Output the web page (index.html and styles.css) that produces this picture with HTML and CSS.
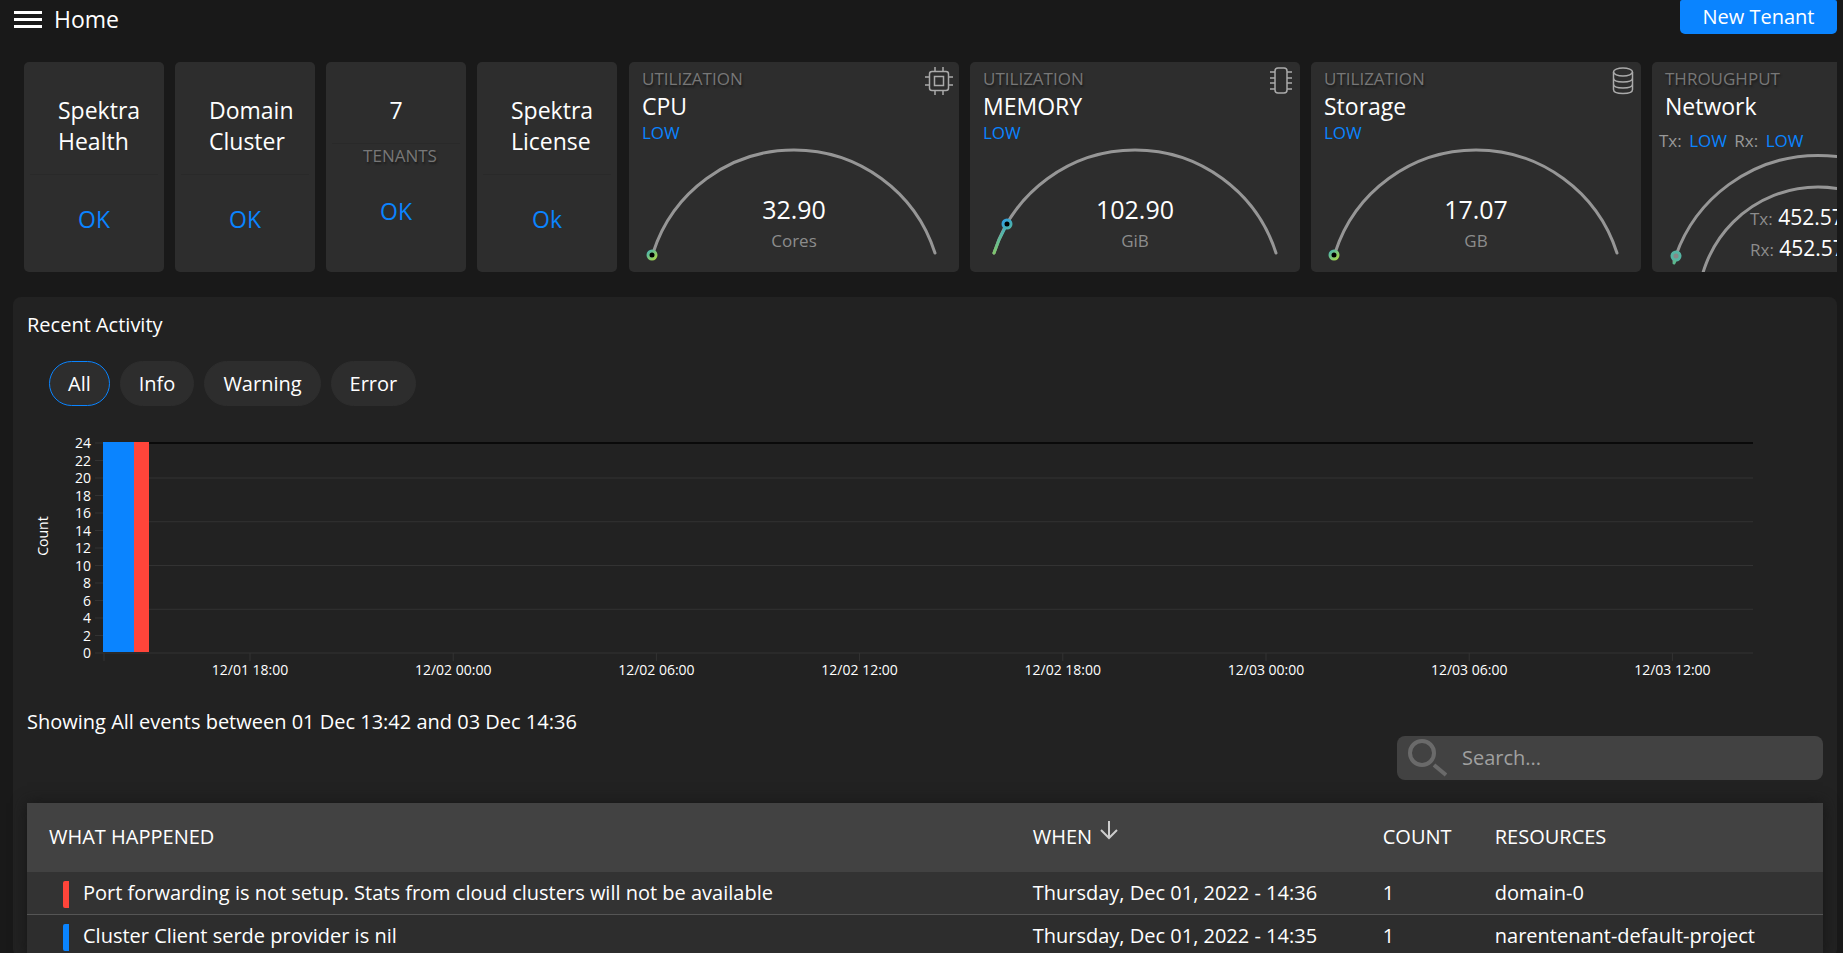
FILE: index.html
```
<!DOCTYPE html>
<html lang="en">

<head>
    <meta charset="UTF-8">
    <meta name="viewport" content="width=device-width, initial-scale=1.0">
    <title>Home</title>
    <link rel="stylesheet" href="styles.css">
</head>

<body>
    <header class="topbar">
        <button class="menu-btn" aria-label="Menu"><span></span><span></span><span></span></button>
        <h1>Home</h1>
        <button class="new-tenant">New Tenant</button>
    </header>

    <section class="cards">
        <div class="card status">
            <div class="status-title">Spektra Health</div>
            <div class="status-value">OK</div>
        </div>
        <div class="card status">
            <div class="status-title">Domain Cluster</div>
            <div class="status-value">OK</div>
        </div>
        <div class="card status">
            <div class="status-title count">7</div>
            <div class="status-label">TENANTS</div>
            <div class="status-value">OK</div>
        </div>
        <div class="card status">
            <div class="status-title">Spektra License</div>
            <div class="status-value">Ok</div>
        </div>

        <div class="gauges">
            <div class="card gauge">
                <div class="gauge-type">UTILIZATION</div>
                <h2>CPU</h2>
                <div class="level">LOW</div>
                <svg class="gauge-icon" width="28" height="28" viewBox="0 0 28 28">
                    <rect x="4.5" y="4.5" width="19" height="19" rx="2.5" />
                    <rect x="9.5" y="9.5" width="9" height="9" />
                    <path d="M10 0v4M18 0v4M10 24v4M18 24v4M0 10h4M0 18h4M24 10h4M24 18h4" />
                </svg>
                <svg class="dial" viewBox="0 0 330 210">
                    <defs>
                        <linearGradient id="dot" x1="0" y1="0" x2="1" y2="1">
                            <stop offset="0" stop-color="#4db6ac" />
                            <stop offset="1" stop-color="#a5d549" />
                        </linearGradient>
                        <linearGradient id="dotBlue" x1="0" y1="0" x2="1" y2="1">
                            <stop offset="0" stop-color="#2f9fe0" />
                            <stop offset="1" stop-color="#4fb3a5" />
                        </linearGradient>
                        <linearGradient id="fill" x1="0" y1="1" x2="0" y2="0">
                            <stop offset="0" stop-color="#7fc66c" />
                            <stop offset="1" stop-color="#46aec0" />
                        </linearGradient>
                    </defs>
                    <path class="track" d="M24 191A148 148 0 0 1 306 191" />
                    <circle class="dot" cx="23" cy="193" r="4" stroke="url(#dot)" />
                    <text class="value" x="165" y="157">32.90</text>
                    <text class="unit" x="165" y="185">Cores</text>
                </svg>
            </div>
            <div class="card gauge">
                <div class="gauge-type">UTILIZATION</div>
                <h2>MEMORY</h2>
                <div class="level">LOW</div>
                <svg class="gauge-icon" width="28" height="28" viewBox="0 0 28 28">
                    <rect x="9" y="1" width="12" height="25" rx="3" />
                    <path d="M4 5h5M4 11h5M4 16h5M4 22h5M21 5h5M21 11h5M21 16h5M21 22h5" />
                </svg>
                <svg class="dial" viewBox="0 0 330 210">
                    <path class="track" d="M24 191A148 148 0 0 1 306 191" />
                    <path class="track filled" d="M24 191A148 148 0 0 1 36 164" />
                    <circle class="dot" cx="37" cy="162" r="4" stroke="url(#dotBlue)" />
                    <text class="value" x="165" y="157">102.90</text>
                    <text class="unit" x="165" y="185">GiB</text>
                </svg>
            </div>
            <div class="card gauge">
                <div class="gauge-type">UTILIZATION</div>
                <h2>Storage</h2>
                <div class="level">LOW</div>
                <svg class="gauge-icon" width="28" height="28" viewBox="0 0 28 28">
                    <ellipse cx="16" cy="5" rx="9.5" ry="4" />
                    <path d="M6.5 5v17.5c0 5.3 19 5.3 19 0V5M6.5 11c0 5.3 19 5.3 19 0M6.5 17c0 5.3 19 5.3 19 0" />
                </svg>
                <svg class="dial" viewBox="0 0 330 210">
                    <path class="track" d="M24 191A148 148 0 0 1 306 191" />
                    <circle class="dot" cx="23" cy="193" r="4" stroke="url(#dot)" />
                    <text class="value" x="165" y="157">17.07</text>
                    <text class="unit" x="165" y="185">GB</text>
                </svg>
            </div>
            <div class="card gauge">
                <div class="gauge-type">THROUGHPUT</div>
                <h2>Network</h2>
                <div class="levels">Tx: <b>LOW</b> Rx: <b>LOW</b></div>
                <svg class="dial" viewBox="0 0 330 210">
                    <path class="track" d="M22 199A151 151 0 0 1 310 199" />
                    <path class="track" d="M46 245A120 120 0 0 1 286 245" />
                    <circle class="dot open" cx="24" cy="194" r="4" />
                    <path class="track tail" d="M22 201L23 199" />
                    <text class="rate" x="98" y="163"><tspan class="dim">Tx:</tspan> 452.57</text>
                    <text class="rate" x="98" y="194"><tspan class="dim">Rx:</tspan> 452.57</text>
                </svg>
            </div>
        </div>
    </section>

    <section class="activity">
        <h3>Recent Activity</h3>
        <div class="filters">
            <button class="active">All</button>
            <button>Info</button>
            <button>Warning</button>
            <button>Error</button>
        </div>

        <svg class="chart" id="chart" viewBox="0 0 1796 260"></svg>

        <p class="summary">Showing All events between 01 Dec 13:42 and 03 Dec 14:36</p>

        <div class="search">
            <svg width="40" height="38" viewBox="0 0 40 38">
                <circle cx="15" cy="14" r="12" />
                <path d="M27 26L39 36" />
            </svg>
            <input type="text" placeholder="Search..." aria-label="Search">
        </div>

        <table class="events">
            <thead>
                <tr>
                    <th class="what">WHAT HAPPENED</th>
                    <th class="when">WHEN
                        <svg width="18" height="20" viewBox="0 0 18 20">
                            <path d="M9 1v16M1 10l8 8 8-8" />
                        </svg>
                    </th>
                    <th class="num">COUNT</th>
                    <th>RESOURCES</th>
                </tr>
            </thead>
            <tbody>
                <tr>
                    <td><span class="mark error"></span>Port forwarding is not setup. Stats from cloud clusters will not be available</td>
                    <td>Thursday, Dec 01, 2022 - 14:36</td>
                    <td>1</td>
                    <td>domain-0</td>
                </tr>
                <tr>
                    <td><span class="mark info"></span>Cluster Client serde provider is nil</td>
                    <td>Thursday, Dec 01, 2022 - 14:35</td>
                    <td>1</td>
                    <td>narentenant-default-project</td>
                </tr>
            </tbody>
        </table>
    </section>

    <script src="chart.js"></script>
</body>

</html>
```

FILE: styles.css
```
* {
    box-sizing: border-box;
}

body {
    margin: 0;
    height: 100vh;
    overflow: hidden;
    background-color: #191919;
    color: #fff;
    font-family: "Open Sans", "Noto Sans", sans-serif;
    font-size: 20px;
}

button,
input {
    font-family: inherit;
    font-size: 20px;
    color: #fff;
    border: none;
}

button {
    cursor: pointer;
}

h1,
h2,
h3,
p {
    margin: 0;
    font-weight: 400;
}

.topbar {
    display: flex;
    align-items: flex-start;
    height: 62px;
    padding: 0 6px 0 14px;
}

.menu-btn {
    display: flex;
    flex-direction: column;
    justify-content: space-between;
    width: 28px;
    height: 17px;
    margin-top: 11px;
    padding: 0;
    background: none;
}

.menu-btn span {
    height: 3px;
    width: 100%;
    background-color: #fff;
}

.topbar h1 {
    margin-left: 12px;
    font-size: 23px;
    font-weight: 500;
    line-height: 38px;
}

.new-tenant {
    width: 157px;
    height: 34px;
    margin-left: auto;
    padding: 0 0 2px;
    background-color: #0a84ff;
    border-radius: 2px 2px 5px 5px;
}

.cards {
    display: flex;
    gap: 11px;
    margin: 0 6px 0 24px;
    overflow: hidden;
}

.card {
    flex-shrink: 0;
    height: 210px;
    background-color: #2d2d2d;
    border-radius: 5px;
}

.status {
    width: 140px;
    padding: 4px 6px;
    text-align: center;
}

.status-title {
    height: 109px;
    padding: 29px 20px 0 28px;
    border-bottom: 1px solid #292929;
    font-size: 23px;
    font-weight: 500;
    line-height: 31px;
    text-align: left;
}

.status-title.count {
    height: 78px;
    padding: 29px 0 0;
    text-align: center;
}

.status-label {
    padding-left: 8px;
    color: #777;
    font-size: 17px;
    line-height: 24px;
    text-shadow: 1px 2px 2px #1c1c1c;
}

.status-value {
    padding-top: 27px;
    color: #0a84ff;
    font-size: 23px;
    font-weight: 500;
    line-height: 34px;
}

.status-label + .status-value {
    padding-top: 26px;
}

.gauges {
    display: flex;
    gap: 11px;
    margin-left: 1px;
}

.gauge {
    position: relative;
    width: 330px;
    padding: 4px 13px;
    overflow: hidden;
}

.gauge-type {
    color: #777;
    font-size: 17px;
    line-height: 26px;
    text-shadow: 1px 2px 2px #1c1c1c;
}

.gauge h2 {
    font-size: 23px;
    font-weight: 500;
    line-height: 28px;
}

.level {
    color: #0a84ff;
    font-size: 17px;
    line-height: 26px;
}

.levels {
    margin: 7px 0 0 -6px;
    color: #999;
    font-size: 17px;
    line-height: 28px;
}

.levels b {
    margin: 0 3px;
    color: #0a84ff;
    font-weight: 400;
}

.gauge-icon {
    position: absolute;
    top: 5px;
    right: 6px;
    fill: none;
    stroke: #aaa;
    stroke-width: 1.5;
}

/* the dial covers the whole card, under the headings */
.dial {
    position: absolute;
    top: 0;
    left: 0;
    width: 330px;
    height: 210px;
}

.track {
    fill: none;
    stroke: #969696;
    stroke-width: 3;
    stroke-linecap: round;
}

.track.filled {
    stroke: url(#fill);
}

.track.tail {
    stroke: #5cb88f;
}

.dot {
    fill: #000;
    stroke-width: 3;
}

.dot.open {
    fill: #888;
    stroke: #55b3a2;
}

.value,
.unit {
    fill: #fff;
    font-size: 25px;
    text-anchor: middle;
}

.unit {
    fill: #8c8c8c;
    font-size: 17px;
}

.rate {
    fill: #fff;
    font-size: 21px;
}

.dim {
    fill: #8c8c8c;
    font-size: 17px;
}

.activity {
    margin: 25px 6px 0 13px;
    padding: 14px 14px 0;
    background-color: #222;
    border-radius: 8px;
}

.activity h3 {
    font-size: 20px;
    line-height: 28px;
}

.filters {
    display: flex;
    gap: 10px;
    margin: 22px 0 0 22px;
}

.filters button {
    height: 45px;
    padding: 0 18px;
    background-color: #2d2d2d;
    border: 1px solid #2d2d2d;
    border-radius: 23px;
    font-weight: 500;
}

.filters .active {
    border-color: #0a84ff;
}

.chart {
    display: block;
    width: 100%;
    margin-top: 25px;
}

.chart text {
    fill: #fff;
    font-size: 14px;
}

.chart .y-label {
    text-anchor: end;
}

.chart .x-label,
.chart .axis-title {
    text-anchor: middle;
}

.chart line {
    stroke: #333;
}

.chart .limit {
    stroke: #0a0a0a;
    stroke-width: 2;
}

.chart .info {
    fill: #0a84ff;
}

.chart .error {
    fill: #ff453a;
}

.summary {
    margin-top: 17px;
    line-height: 28px;
}

.search {
    display: flex;
    align-items: center;
    width: 426px;
    height: 44px;
    margin-left: auto;
    padding-left: 10px;
    background-color: #424242;
    border-radius: 8px;
}

.search svg {
    fill: none;
    stroke: #6a6a6a;
    stroke-width: 4;
}

.search input {
    flex: 1;
    min-width: 0;
    height: 100%;
    padding: 0 15px 2px;
    background: none;
    outline: none;
}

.search input::placeholder {
    color: #a0a0a0;
}

.events {
    width: 100%;
    margin-top: 23px;
    border-collapse: collapse;
    table-layout: fixed;
    background-color: #2d2d2d;
    box-shadow: 0 0 14px #161616;
    text-align: left;
}

.events thead {
    background-color: #424242;
}

.events th {
    height: 69px;
    padding: 0 0 2px;
    font-weight: 400;
}

.events .what {
    width: 56%;
    padding-left: 22px;
}

.events .when {
    width: 350px;
}

.events .num {
    width: 112px;
}

.events th svg {
    margin: -10px 0 -10px 3px;
    fill: none;
    stroke: #ccc;
    stroke-width: 2;
    vertical-align: 14px;
}

.events td {
    height: 42px;
    padding: 0;
    border-bottom: 1px solid #555;
}

.events tbody tr:first-child {
    background-color: #333;
}

.mark {
    display: inline-block;
    width: 6px;
    height: 27px;
    margin: -4px 14px -4px 36px;
    border-radius: 2px 0 0 2px;
    vertical-align: middle;
}

.mark.error {
    background-color: #ff453a;
}

.mark.info {
    background-color: #0a84ff;
}
```

FILE: chart.js
```
const chart = document.getElementById('chart');
const left = 77;
const right = 1726;
const top0 = 12;
const bottom = 222;
const maxCount = 24;

const labels = ['12/01 18:00', '12/02 00:00', '12/02 06:00', '12/02 12:00',
    '12/02 18:00', '12/03 00:00', '12/03 06:00', '12/03 12:00'];

function yPos(count) {
    return bottom - (bottom - top0) * count / maxCount;
}

let content = '';

// grid lines
[0, 5, 10, 15, 20].forEach(count => {
    content += `<line x1="${left}" x2="${right}" y1="${yPos(count)}" y2="${yPos(count)}" />`;
});
content += `<line class="limit" x1="${left}" x2="${right}" y1="${top0}" y2="${top0}" />`;

// y axis
for (let count = 0; count <= maxCount; count += 2) {
    content += `<line x1="68" x2="${left}" y1="${yPos(count)}" y2="${yPos(count)}" />`;
    content += `<text class="y-label" x="64" y="${yPos(count) + 5}">${count}</text>`;
}
content += `<text class="axis-title" transform="translate(21 105) rotate(-90)">Count</text>`;

// x axis
content += `<line x1="${left}" x2="${left}" y1="${bottom}" y2="${bottom + 8}" />`;
labels.forEach((label, i) => {
    const x = 223 + i * 203.2;
    content += `<line x1="${x}" x2="${x}" y1="${bottom}" y2="${bottom + 8}" />`;
    content += `<text class="x-label" x="${x}" y="${bottom + 22}">${label}</text>`;
});

// bars
content += `<rect class="info" x="76" y="${top0 - 1}" width="31" height="210" />`;
content += `<rect class="error" x="107" y="${top0 - 1}" width="15" height="210" />`;

chart.innerHTML = content;
```
